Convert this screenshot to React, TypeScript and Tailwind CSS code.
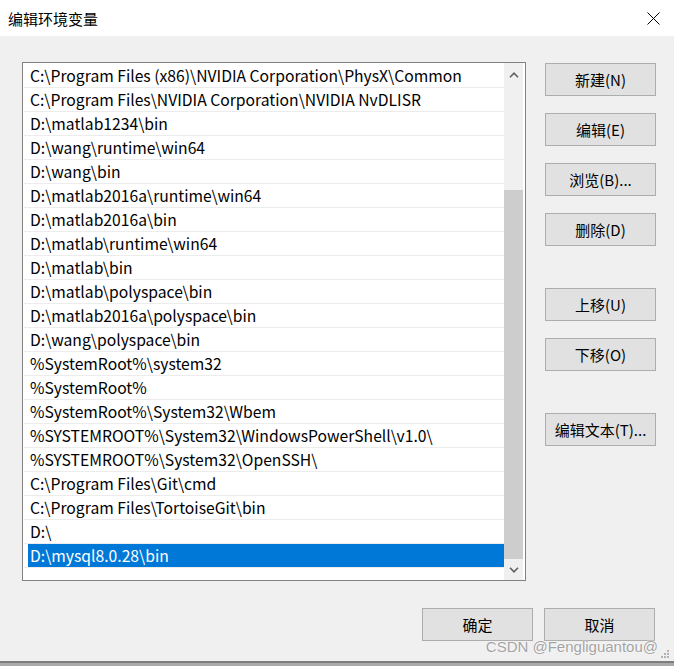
import React from "react";

const rows = [
  "C:\\Program Files (x86)\\NVIDIA Corporation\\PhysX\\Common",
  "C:\\Program Files\\NVIDIA Corporation\\NVIDIA NvDLISR",
  "D:\\matlab1234\\bin",
  "D:\\wang\\runtime\\win64",
  "D:\\wang\\bin",
  "D:\\matlab2016a\\runtime\\win64",
  "D:\\matlab2016a\\bin",
  "D:\\matlab\\runtime\\win64",
  "D:\\matlab\\bin",
  "D:\\matlab\\polyspace\\bin",
  "D:\\matlab2016a\\polyspace\\bin",
  "D:\\wang\\polyspace\\bin",
  "%SystemRoot%\\system32",
  "%SystemRoot%",
  "%SystemRoot%\\System32\\Wbem",
  "%SYSTEMROOT%\\System32\\WindowsPowerShell\\v1.0\\",
  "%SYSTEMROOT%\\System32\\OpenSSH\\",
  "C:\\Program Files\\Git\\cmd",
  "C:\\Program Files\\TortoiseGit\\bin",
  "D:\\",
  "D:\\mysql8.0.28\\bin",
];

function Btn({ label }: { label: string }) {
  return (
    <div className="w-[111px] h-[33px] shrink-0 border border-[#adadad] bg-[#e1e1e1] flex items-center justify-center text-[15px] text-black leading-none">
      {label}
    </div>
  );
}

function Chevron({ up }: { up: boolean }) {
  return (
    <svg width="10" height="6" viewBox="0 0 10 6">
      <path
        d={up ? "M1 5.2 L5 1.2 L9 5.2" : "M1 0.8 L5 4.8 L9 0.8"}
        fill="none"
        stroke="#606060"
        strokeWidth="1.6"
      />
    </svg>
  );
}

export default function App() {
  return (
    <div
      className="w-[674px] h-[666px] bg-[#f0f0f0] flex flex-col relative overflow-hidden text-black"
      style={{ fontFamily: '"Noto Sans CJK SC", "Noto Sans", sans-serif' }}
    >
      {/* Title bar */}
      <div className="h-[36px] shrink-0 bg-white flex items-center justify-between pl-[8px] pr-[14px]">
        <span className="text-[15px] leading-none">编辑环境变量</span>
        <svg width="13" height="13" viewBox="0 0 13 13">
          <path d="M0.5 0.5 L12.5 12.5 M12.5 0.5 L0.5 12.5" stroke="#000" strokeWidth="1" />
        </svg>
      </div>

      {/* Main area */}
      <div className="flex pt-[26px] pl-[22px]">
        {/* List box */}
        <div className="w-[504px] h-[519px] shrink-0 border border-[#828282] bg-white flex pl-[1px] pr-[1px]">
          <div className="w-[480px] pt-[1px] flex flex-col">
            {rows.map((r, i) => {
              const sel = i === rows.length - 1;
              return (
                <div key={i} className="h-[24px] shrink-0 border-b border-[#ececec] flex">
                  <div
                    className={
                      sel
                        ? "ml-[4px] flex-1 bg-[#0078d7] text-white pl-[2px] text-[15.7px] leading-[23px] whitespace-nowrap"
                        : "ml-[4px] flex-1 pl-[2px] text-[15.7px] leading-[23px] whitespace-nowrap"
                    }
                  >
                    {r}
                  </div>
                </div>
              );
            })}
          </div>
          {/* Scrollbar */}
          <div className="w-[19px] ml-auto mr-[1px] bg-[#f0f0f0] flex flex-col">
            <div className="h-[24px] shrink-0 flex items-center justify-center">
              <Chevron up={true} />
            </div>
            <div className="h-[103px] shrink-0" />
            <div className="h-[369px] shrink-0 bg-[#cdcdcd]" />
            <div className="h-[21px] shrink-0 flex items-center justify-center">
              <Chevron up={false} />
            </div>
          </div>
        </div>

        {/* Button column */}
        <div className="ml-[19px] pt-[1px] flex flex-col">
          <Btn label="新建(N)" />
          <div className="h-[17px]" />
          <Btn label="编辑(E)" />
          <div className="h-[17px]" />
          <Btn label="浏览(B)..." />
          <div className="h-[17px]" />
          <Btn label="删除(D)" />
          <div className="h-[42px]" />
          <Btn label="上移(U)" />
          <div className="h-[17px]" />
          <Btn label="下移(O)" />
          <div className="h-[42px]" />
          <Btn label="编辑文本(T)..." />
        </div>
      </div>

      {/* Bottom buttons */}
      <div className="flex justify-end gap-[11px] pr-[19px] mt-[27px]">
        <Btn label="确定" />
        <Btn label="取消" />
      </div>

      <div className="flex-1" />
      <div className="h-[2px] shrink-0 bg-[#7d7d7d]" />
      <div className="h-[3px] shrink-0 bg-[#a9a9a9]" />

      {/* Watermark overlay */}
      <div
        className="absolute right-[16px] top-[638px] text-[15px] leading-[18px] text-[#a3a3a3] [text-shadow:0_0_2px_#fff,0_0_1px_#fff] whitespace-nowrap"
        style={{ fontFamily: '"Liberation Sans", Arial, sans-serif' }}
      >
        CSDN @Fengliguantou@
      </div>
      {/* Resize grip */}
      <svg className="absolute right-[4px] top-[649px]" width="12" height="12" viewBox="0 0 12 12">
        <rect x="9" y="1" width="2" height="2" fill="#b4b4b4" />
        <rect x="6" y="4" width="2" height="2" fill="#b4b4b4" />
        <rect x="9" y="4" width="2" height="2" fill="#b4b4b4" />
        <rect x="3" y="7" width="2" height="2" fill="#b4b4b4" />
        <rect x="6" y="7" width="2" height="2" fill="#b4b4b4" />
        <rect x="9" y="7" width="2" height="2" fill="#b4b4b4" />
      </svg>
    </div>
  );
}
